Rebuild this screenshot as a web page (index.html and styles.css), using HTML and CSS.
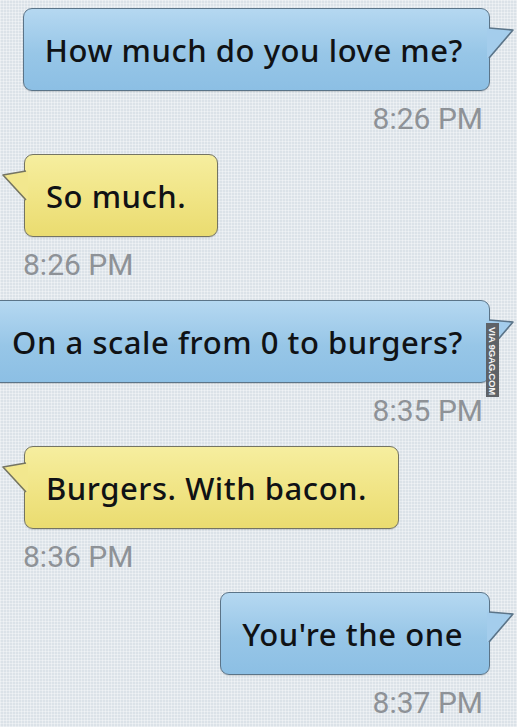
FILE: index.html
```html
<!DOCTYPE html>
<html lang="en">
<head>
<meta charset="utf-8">
<title>Messages</title>
<link rel="stylesheet" href="styles.css">
</head>
<body>
<main class="thread">
  <div class="msg out">
    <div class="bubble blue">How much do you love me?<svg class="tail tail-r" width="28" height="34" viewBox="0 0 28 34"><polygon points="0,1 3,1 26,3 3,31 0,31" fill="#a4cdec"/><path d="M2,1 L26,3 L2,31" fill="none" stroke="#5b7488" stroke-width="1.6" stroke-linejoin="round"/></svg></div>
    <div class="time">8:26 PM</div>
  </div>
  <div class="msg in">
    <div class="bubble yellow">So much.<svg class="tail tail-l" width="28" height="34" viewBox="0 0 28 34"><polygon points="28,1 25,1 3,5 25,30 28,30" fill="#f2e78e"/><path d="M26,1 L3,5 L26,30" fill="none" stroke="#747463" stroke-width="1.6" stroke-linejoin="round"/></svg></div>
    <div class="time">8:26 PM</div>
  </div>
  <div class="msg out">
    <div class="bubble blue">On a scale from 0 to burgers?<svg class="tail tail-r" width="28" height="34" viewBox="0 0 28 34"><polygon points="0,1 3,1 26,3 3,31 0,31" fill="#a4cdec"/><path d="M2,1 L26,3 L2,31" fill="none" stroke="#5b7488" stroke-width="1.6" stroke-linejoin="round"/></svg></div>
    <div class="time">8:35 PM</div>
  </div>
  <div class="msg in">
    <div class="bubble yellow">Burgers. With bacon.<svg class="tail tail-l" width="28" height="34" viewBox="0 0 28 34"><polygon points="28,1 25,1 3,5 25,30 28,30" fill="#f2e78e"/><path d="M26,1 L3,5 L26,30" fill="none" stroke="#747463" stroke-width="1.6" stroke-linejoin="round"/></svg></div>
    <div class="time">8:36 PM</div>
  </div>
  <div class="msg out">
    <div class="bubble blue">You're the one<svg class="tail tail-r" width="28" height="34" viewBox="0 0 28 34"><polygon points="0,1 3,1 26,3 3,31 0,31" fill="#a4cdec"/><path d="M2,1 L26,3 L2,31" fill="none" stroke="#5b7488" stroke-width="1.6" stroke-linejoin="round"/></svg></div>
    <div class="time">8:37 PM</div>
  </div>
</main>
<div class="watermark">VIA 9GAG.COM</div>
</body>
</html>
```

FILE: styles.css
```css
html, body {
  margin: 0;
  padding: 0;
}
body {
  width: 517px;
  height: 727px;
  overflow: hidden;
  position: relative;
  background-color: #dbe2e8;
  background-image:
    repeating-linear-gradient(0deg, rgba(255,255,255,0.35) 0 1px, transparent 1px 3px),
    repeating-linear-gradient(90deg, rgba(255,255,255,0.35) 0 1px, transparent 1px 3px);
}
.thread {
  display: flex;
  flex-direction: column;
  padding: 8px 27px 0 24px;
}
.msg {
  display: flex;
  flex-direction: column;
}
.msg.out { align-items: flex-end; }
.msg.in { align-items: flex-start; }
.bubble {
  position: relative;
  flex-shrink: 0;
  box-sizing: border-box;
  height: 83px;
  display: flex;
  align-items: center;
  padding: 0 26px 0 21px;
  border-radius: 9px;
  font-family: "Noto Sans", "DejaVu Sans", sans-serif;
  font-size: 31px;
  font-weight: 500;
  letter-spacing: 0.55px;
  color: #101215;
  white-space: nowrap;
  box-shadow: 0 1px 1px rgba(0,0,0,0.12);
}
.bubble.blue {
  border: 1.5px solid #5b7488;
  background: linear-gradient(#b5d8f1, #97c6e7 55%, #8cbfe4);
}
.bubble.yellow {
  padding-right: 31px;
  border: 1.5px solid #747463;
  background: linear-gradient(#f6ee9f, #f0e484 55%, #eadc70);
}
.tail {
  position: absolute;
  top: 18px;
}
.tail-r { right: -25.5px; }
.tail-l { left: -25.5px; top: 15px; }
.time {
  font-family: Roboto, "Liberation Sans", sans-serif;
  font-size: 30px;
  line-height: 30px;
  color: #8e9297;
  margin-top: 13px;
  margin-bottom: 20px;
}
.out .time { margin-right: 7px; }
.in .time { margin-left: -1px; }
.watermark {
  position: absolute;
  left: 486px;
  top: 323px;
  width: 13px;
  height: 74px;
  box-sizing: border-box;
  padding-top: 4px;
  background: #5e6267;
  color: #f4f4f4;
  writing-mode: vertical-rl;
  white-space: nowrap;
  font-family: "Liberation Sans", Arial, sans-serif;
  font-weight: bold;
  font-size: 9.6px;
  line-height: 13px;
  letter-spacing: -0.2px;
}
```
